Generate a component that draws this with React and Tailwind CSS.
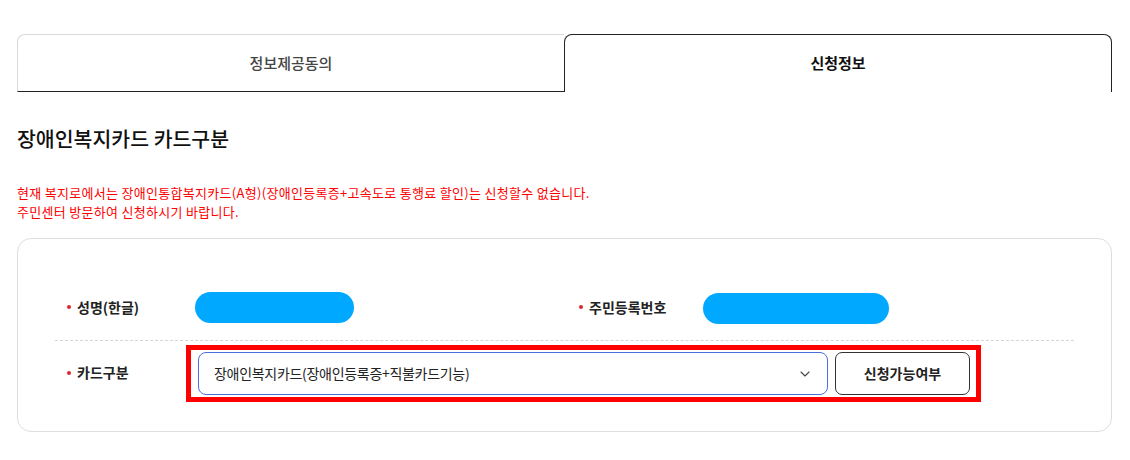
import { ChevronDown } from 'lucide-react';

const font = { fontFamily: '"Noto Sans CJK KR", "Noto Sans", sans-serif' };

function Label({ children }) {
  return (
    <div className="flex items-center gap-[6px] text-[14px] font-bold text-[#222]">
      <span className="w-[4px] h-[4px] rounded-full bg-[#e0262b]" />
      {children}
    </div>
  );
}

export default function App() {
  return (
    <div className="bg-white w-[1130px] h-[460px] pt-[34px] pl-[17px]" style={font}>
      {/* Tabs */}
      <div className="flex w-[1095px] h-[58px]">
        <div className="flex-1 flex items-center justify-center border-t border-l border-[#d9d9d9] border-b border-b-[#222] rounded-tl-[8px] text-[15px] font-medium text-[#444]">
          정보제공동의
        </div>
        <div className="flex-1 flex items-center justify-center border-t border-l border-r border-[#222] rounded-t-[8px] text-[15px] font-bold text-[#111]">
          신청정보
        </div>
      </div>

      <h2 className="mt-[32px] text-[20.5px] font-medium text-[#111] leading-[28px]">장애인복지카드 카드구분</h2>

      <div className="mt-[31px] text-[13px] leading-[19px] text-[#ff0000] tracking-[0.3px]">
        <p>현재 복지로에서는 장애인통합복지카드(A형)(장애인등록증+고속도로 통행료 할인)는 신청할수 없습니다.</p>
        <p>주민센터 방문하여 신청하시기 바랍니다.</p>
      </div>

      {/* Form card */}
      <div className="mt-[17px] w-[1095px] h-[194px] border border-[#dedede] rounded-[14px] px-[37px] pt-[52px]">
        <div className="flex items-center h-[32px] border-b border-dashed border-[#d6d6d6] pb-[17px] box-content">
          <div className="w-[500px] flex items-center">
            <div className="w-[140px] pl-[12px]"><Label>성명(한글)</Label></div>
            <div className="w-[159px] h-[31px] rounded-full bg-[#00a8ff]" />
          </div>
          <div className="flex items-center">
            <div className="w-[148px] pl-[24px]"><Label>주민등록번호</Label></div>
            <div className="w-[186px] h-[31px] rounded-full bg-[#00a8ff] mt-[3px]" />
          </div>
        </div>

        <div className="flex items-start pt-[4px]">
          <div className="w-[131px] pl-[12px] h-[55px] flex items-center"><Label>카드구분</Label></div>
          <div className="flex items-center gap-[7px] border-[5px] border-[#ff0000] pl-[7px] pr-[6px] py-[2px]">
            <div className="w-[630px] h-[43px] flex items-center justify-between border border-[#4a6ee0] rounded-[8px] pl-[15px] pr-[14px] text-[14px] tracking-[-0.3px] text-[#222]">
              <span>장애인복지카드(장애인등록증+직불카드기능)</span>
              <ChevronDown size={16} strokeWidth={1.6} className="text-[#444]" />
            </div>
            <button className="w-[135px] h-[43px] border border-[#333] rounded-[7px] text-[14px] font-bold text-[#222]">
              신청가능여부
            </button>
          </div>
        </div>
      </div>
    </div>
  );
}
